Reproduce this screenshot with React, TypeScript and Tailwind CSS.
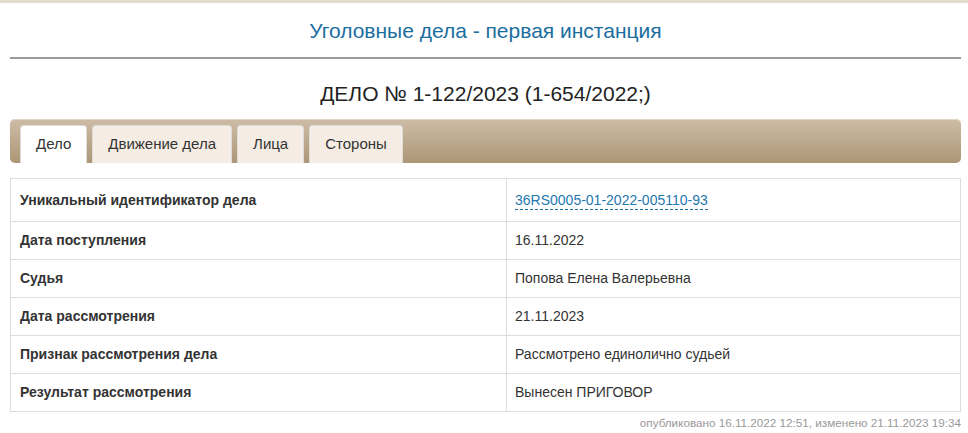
import React from 'react';

const rows: { label: string; value: string; link?: boolean }[] = [
  { label: 'Уникальный идентификатор дела', value: '36RS0005-01-2022-005110-93', link: true },
  { label: 'Дата поступления', value: '16.11.2022' },
  { label: 'Судья', value: 'Попова Елена Валерьевна' },
  { label: 'Дата рассмотрения', value: '21.11.2023' },
  { label: 'Признак рассмотрения дела', value: 'Рассмотрено единолично судьей' },
  { label: 'Результат рассмотрения', value: 'Вынесен ПРИГОВОР' },
];

const tabs = ['Дело', 'Движение дела', 'Лица', 'Стороны'];

const App: React.FC = () => {
  return (
    <div className="min-h-[433px] bg-white text-[#333] font-['Liberation_Sans',Arial,sans-serif]">
      <div className="h-[3px] bg-[#e5dccf]" />
      <div className="px-[10px] pr-[7px]">
        <h1 className="pt-[16px] pb-[14px] text-center text-[21px] leading-[24px] text-[#1b6e9f]">
          Уголовные дела - первая инстанция
        </h1>
        <div className="h-[2px] bg-[#9a9a9a]" />
        <h2 className="pt-[23px] pb-[13px] text-center text-[21px] leading-[24px] text-[#222]">
          ДЕЛО № 1-122/2023 (1-654/2022;)
        </h2>

        <div className="flex h-[44px] items-end gap-[5px] rounded-[5px] bg-gradient-to-b from-[#cdbca6] to-[#ad9676] pl-[10px] shadow-[inset_0_1px_0_#e0d4c4]">
          {tabs.map((t, i) => (
            <div
              key={t}
              className={
                'flex h-[38px] items-center rounded-t-[4px] border border-b-0 border-[#ddd] px-[15px] text-[15px] text-[#333] ' +
                (i === 0 ? 'bg-white' : 'bg-[#f5ede3]')
              }
            >
              {t}
            </div>
          ))}
        </div>

        <table className="mt-[15px] w-full border-collapse text-[14px]">
          <tbody>
            {rows.map((r, i) => (
              <tr key={r.label} className={i === 0 ? 'h-[43px]' : 'h-[38px]'}>
                <td className="w-[496px] border border-[#ddd] px-[9px] font-bold text-[#333]">{r.label}</td>
                <td className="border border-[#ddd] px-[8px] text-[#333]">
                  {r.link ? (
                    <span className="border-b border-dashed border-[#1b6e9f] pb-[1px] text-[#1f78b0]">{r.value}</span>
                  ) : (
                    r.value
                  )}
                </td>
              </tr>
            ))}
          </tbody>
        </table>
        <div className="pt-[3px] text-right text-[11.7px] leading-[16px] text-[#999]">
          опубликовано 16.11.2022 12:51, изменено 21.11.2023 19:34
        </div>
      </div>
    </div>
  );
};

export default App;
